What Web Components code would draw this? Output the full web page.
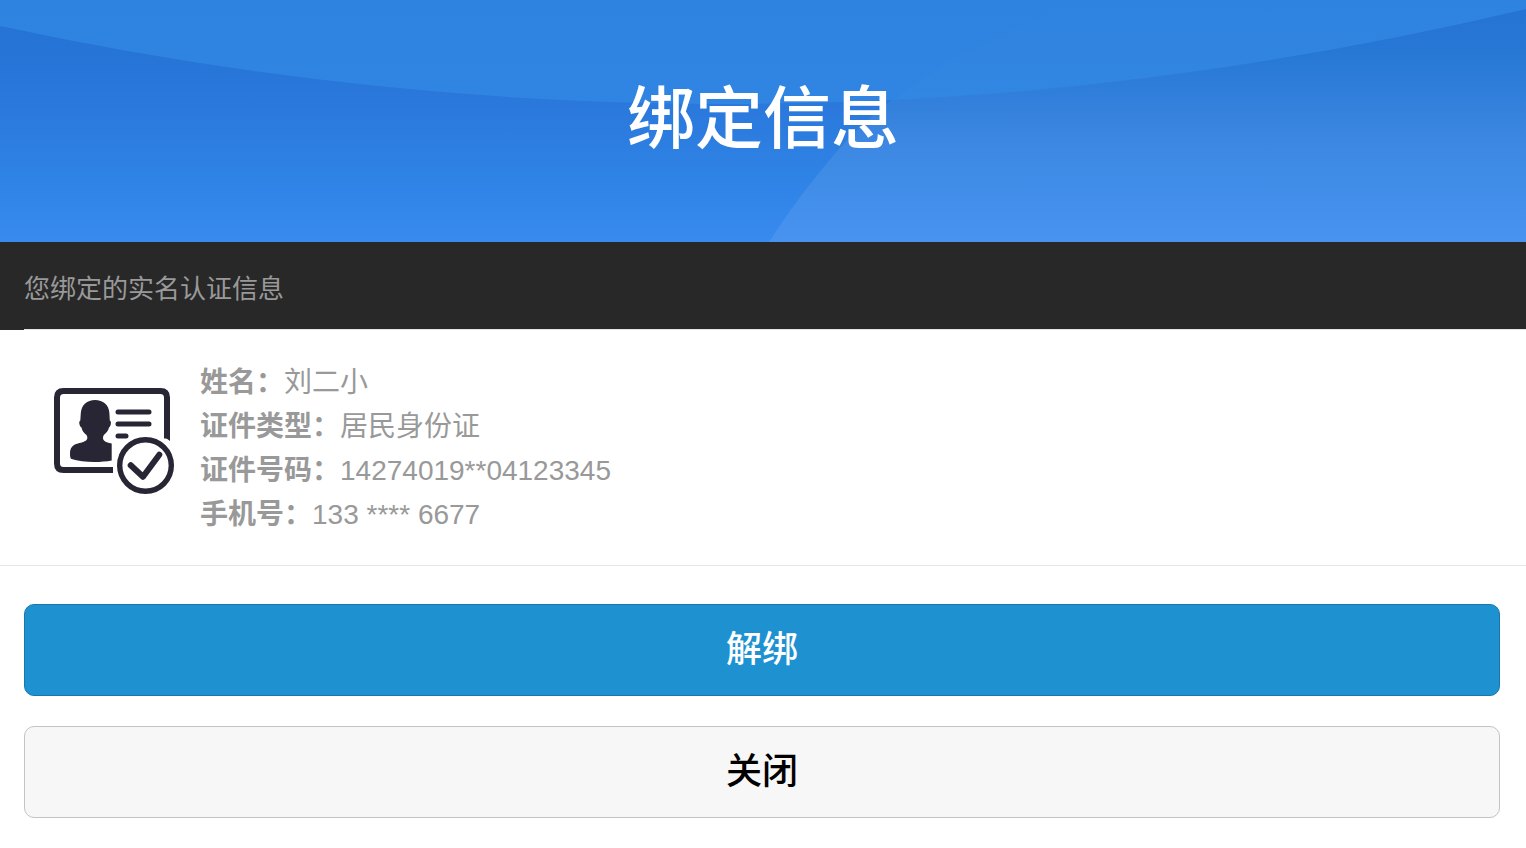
<!DOCTYPE html>
<html lang="zh-CN">
<head>
<meta charset="utf-8">
<meta name="viewport" content="width=device-width, initial-scale=1">
<title>绑定信息</title>
<style>
  body {
    margin: 0;
    background: #fff;
    font-family: "Liberation Sans", "Noto Sans CJK SC", sans-serif;
  }
</style>
</head>
<body>
<binding-page></binding-page>

<script>
class PageHero extends HTMLElement {
  constructor() {
    super();
    this.attachShadow({ mode: 'open' }).innerHTML = `
      <style>
        :host { display: grid; color: #fff; }
        svg { grid-area: 1 / 1; width: 100%; height: 100%; min-height: 0; contain: size; display: block; }
        h1 { grid-area: 1 / 1; z-index: 1; margin: 0; padding: 69px 0 73px; font-size: 68px; line-height: 100px; font-weight: 500; text-align: center; }
      </style>
      <svg viewBox="0 0 1526 242" preserveAspectRatio="none" aria-hidden="true">
        <defs>
          <linearGradient id="base" x1="0" y1="0" x2="0" y2="1">
            <stop offset="0" stop-color="#2372d4"/>
            <stop offset=".22" stop-color="#2574d6"/>
            <stop offset=".46" stop-color="#2b79dc"/>
            <stop offset=".7" stop-color="#2e82e4"/>
            <stop offset="1" stop-color="#388aef"/>
          </linearGradient>
          <linearGradient id="glow" x1="0" y1="0" x2="0" y2="242" gradientUnits="userSpaceOnUse">
            <stop offset="0" stop-color="#fff" stop-opacity="0"/>
            <stop offset=".2" stop-color="#64d2c8" stop-opacity=".03"/>
            <stop offset=".42" stop-color="#8cdcdc" stop-opacity=".08"/>
            <stop offset=".6" stop-color="#fff" stop-opacity=".075"/>
            <stop offset="1" stop-color="#fff" stop-opacity=".08"/>
          </linearGradient>
          <linearGradient id="sky" x1="0" y1="0" x2="0" y2="104" gradientUnits="userSpaceOnUse">
            <stop offset="0" stop-color="#2f83e0"/>
            <stop offset="1" stop-color="#3085e2"/>
          </linearGradient>
        </defs>
        <path fill="url(#base)" d="M0 0H1526V242H0Z"/>
        <path fill="url(#glow)" d="M769 242Q799 195 838 150Q890 91 975 47Q1040 15 1100 0H1526V242Z"/>
        <path fill="url(#sky)" d="M0 0H1526V9Q763 190 0 26Z"/>
        <path fill="url(#glow)" fill-opacity=".3" d="M895 100Q928 71 975 47Q1040 15 1100 0H1526V9Q1190 89 895 100Z"/>
      </svg>
      <h1><slot></slot></h1>`;
  }
}
customElements.define('page-hero', PageHero);

class SectionTitle extends HTMLElement {
  constructor() {
    super();
    this.attachShadow({ mode: 'open' }).innerHTML = `
      <style>
        :host { display: block; position: relative; padding: 27px 24px 21px; background: #282828; color: #999; }
        :host::after { content: ""; position: absolute; left: 24px; right: 0; bottom: 0; height: 1px; background: #e5e5e5; }
        h2 { margin: 0; font-size: 26px; line-height: 40px; font-weight: 400; }
      </style>
      <h2><slot></slot></h2>`;
  }
}
customElements.define('section-title', SectionTitle);

class IdCardIcon extends HTMLElement {
  constructor() {
    super();
    this.attachShadow({ mode: 'open' }).innerHTML = `
      <style>
        :host { display: block; width: 120px; height: 106px; }
        svg { display: block; }
      </style>
      <svg width="120" height="106" viewBox="0 0 120 106" fill="none" stroke="#282635" stroke-linecap="round" stroke-linejoin="round" aria-hidden="true">
        <path stroke-width="6" stroke-linecap="butt" d="M59 82H9.500Q3 82 3 75.500V9.500Q3 3 9.500 3H106.500Q113 3 113 9.500V50.500"/>
        <path fill="#282635" stroke="none" d="M110 49Q113 50.500 116 53V49Z"/>
        <path fill="#282635" stroke="none" d="M41 12C49 12 55 17 55.400 25L55.800 32.500C57.800 33 57 38.500 55 39.500C54.500 43 52 45 49.800 47C48.800 49 48.600 51 50 52.500C52 54.500 54.500 55 57.700 55.500V72.500C46 74.800 28 74.600 17.500 71Q16 70.500 16 66C16 59.500 18.500 57 24 55.500C28 54.300 32.500 53.500 33.300 50.500Q33.600 48.500 32.500 47C30 45 28 42.500 27.500 39.500C25.500 38.500 24.300 33.500 26.300 32.500L26.800 25C27.500 17 33 12 41 12Z"/>
        <path stroke-width="5" d="M64 24H95M64 36H95M64 48H72"/>
        <circle cx="91.500" cy="77.500" r="25.800" stroke-width="5.400"/>
        <path stroke-width="6" d="M76.700 77.300L89 88.800L105.300 66.700"/>
      </svg>`;
  }
}
customElements.define('id-card-icon', IdCardIcon);

class IdentityCard extends HTMLElement {
  constructor() {
    super();
    this.attachShadow({ mode: 'open' }).innerHTML = `
      <style>
        :host { display: flex; align-items: flex-start; gap: 26px; padding: 31px 24px 28px 54px; border-bottom: 1px solid #e5e5e5; color: #999; }
        id-card-icon { flex: none; padding-top: 27px; }
        dl { margin: 0; font-size: 28px; line-height: 44px; }
        div { display: flex; }
        dt { font-weight: 700; }
        dd { margin: 0; }
      </style>
      <id-card-icon></id-card-icon>
      <dl>
        <div><dt>姓名：</dt><dd>刘二小</dd></div>
        <div><dt>证件类型：</dt><dd>居民身份证</dd></div>
        <div><dt>证件号码：</dt><dd>14274019**04123345</dd></div>
        <div><dt>手机号：</dt><dd>133 **** 6677</dd></div>
      </dl>`;
  }
}
customElements.define('identity-card', IdentityCard);

class ActionButton extends HTMLElement {
  constructor() {
    super();
    this.attachShadow({ mode: 'open' }).innerHTML = `
      <style>
        :host { display: block; --fill: #f7f7f7; --edge: #c4c4c4; --ink: #000; }
        :host([primary]) { --fill: #1e92d0; --edge: #1878ac; --ink: #fff; }
        button { display: block; box-sizing: border-box; width: 100%; margin: 0; padding: 20px; border: 1px solid var(--edge); border-radius: 10px; background: var(--fill); color: var(--ink); font: inherit; font-size: 36px; line-height: 50px; font-weight: 500; cursor: pointer; }
      </style>
      <button type="button"><slot></slot></button>`;
  }
}
customElements.define('action-button', ActionButton);

class BindingPage extends HTMLElement {
  constructor() {
    super();
    this.attachShadow({ mode: 'open' }).innerHTML = `
      <style>
        :host { display: block; }
        .actions { display: grid; gap: 30px; padding: 38px 26px 30px 24px; }
      </style>
      <page-hero>绑定信息</page-hero>
      <main>
        <section-title>您绑定的实名认证信息</section-title>
        <identity-card></identity-card>
        <div class="actions">
          <action-button primary>解绑</action-button>
          <action-button>关闭</action-button>
        </div>
      </main>`;
  }
}
customElements.define('binding-page', BindingPage);
</script>
</body>
</html>
